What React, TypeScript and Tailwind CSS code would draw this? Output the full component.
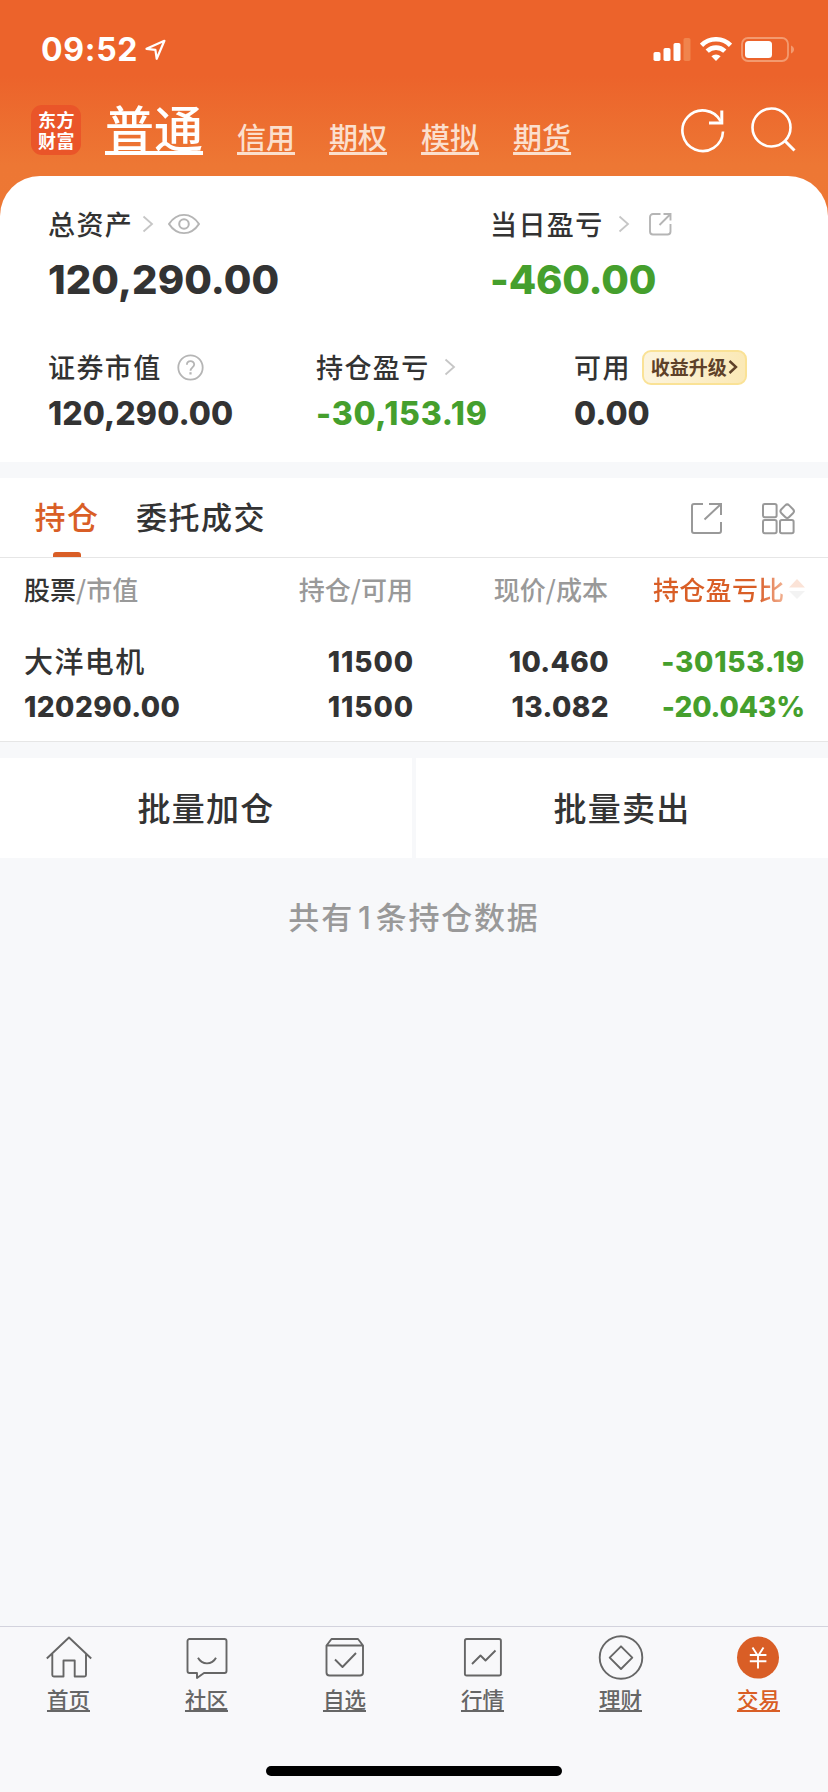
import type { ReactNode } from "react";

const CJK = "font-['Noto_Sans_CJK_SC',sans-serif]";
const NUM = "font-['Inter',sans-serif] font-extrabold";

function Chevron() {
  return (
    <svg width="12" height="18" viewBox="0 0 12 18" fill="none" stroke="#c6c6c6" strokeWidth="1.8" className="block">
      <path d="M1.500 1.500 10 9l-8.500 7.500" />
    </svg>
  );
}

function StatusBar() {
  return (
    <div className="flex h-[98px] items-start pl-[41px] pr-[33px] text-white">
      <span className="mt-[30px] w-[104px] font-['Inter',sans-serif] text-[32px] font-bold leading-[40px] tracking-[0.700px]">09:52</span>
      <svg width="22" height="22" viewBox="0 0 22 22" className="mt-[39px]" fill="none" stroke="#fff" strokeWidth="2.200" strokeLinejoin="round">
        <path d="M1.500 9.800 19.400 1.800 11.700 19.800 10.400 10.900Z" />
      </svg>
      <div className="flex-1" />
      <svg width="38" height="24" viewBox="0 0 38 24" className="mt-[38px]" fill="#fff">
        <rect x="0.500" y="14" width="7" height="9" rx="1.800" />
        <rect x="10.500" y="10" width="7" height="13" rx="1.800" />
        <rect x="20.500" y="5" width="7" height="18" rx="1.800" />
        <rect x="30.500" y="0" width="7" height="23" rx="1.800" fill="#f0844d" />
      </svg>
      <svg width="32" height="24" viewBox="0 0 32 24" className="ml-[9px] mt-[37px]" fill="none" stroke="#fff" strokeWidth="4.600">
        <path d="M1.500 8.300a20.500 20.500 0 0 1 29 0" />
        <path d="M7.200 14.200a12.600 12.600 0 0 1 17.600 0" />
        <path d="M16 24l-4.600-4.700a6.600 6.600 0 0 1 9.200 0z" fill="#fff" stroke="none" />
      </svg>
      <svg width="54" height="26" viewBox="0 0 54 26" className="ml-[9px] mt-[37px]">
        <rect x="1" y="1" width="46" height="23" rx="6" fill="none" stroke="#f39a6f" strokeWidth="1.800" />
        <rect x="4" y="4" width="27" height="17" rx="3.500" fill="#fff" />
        <path d="M50 8.500c4 1.500 4 6.500 0 8z" fill="#f39a6f" />
      </svg>
    </div>
  );
}

function NavBar() {
  return (
    <div className="flex h-[78px] items-start pl-[31px]">
      <div className="mt-[7px] h-[50px] w-[50px] rounded-[11px] bg-[#ea5529] pl-px pt-[6px] text-center font-['Liberation_Sans','Noto_Sans_CJK_SC',sans-serif] text-[18px] font-bold leading-[21px] tracking-[0.500px] text-white">
        东方
        <br />
        财富
      </div>
      <span className={`${CJK} ml-[24px] w-[98px] whitespace-nowrap text-[49px] font-medium leading-[56px] text-white underline decoration-[4px] underline-offset-[4px] [text-decoration-skip-ink:none]`}>
        普通
      </span>
      <div className={`${CJK} ml-[34px] mt-[18px] flex gap-[34px] text-[29px] font-[450] leading-[40px] text-[#fbdfcd]`}>
        {["信用", "期权", "模拟", "期货"].map((t) => (
          <span key={t} className="underline decoration-[3px] underline-offset-[3px] [text-decoration-skip-ink:none]">
            {t}
          </span>
        ))}
      </div>
      <svg width="46" height="46" viewBox="0 0 46 46" className="ml-[109px] mt-[9px]" fill="none" stroke="#fff" strokeWidth="2.600">
        <path d="M43 24.500A20.300 20.300 0 1 1 40.800 14.500" />
        <path d="M41.800 3.500V16H29" strokeWidth="3" />
      </svg>
      <svg width="46" height="46" viewBox="0 0 46 46" className="ml-[24px] mt-[9px]" fill="none" stroke="#fff" strokeWidth="2.600">
        <circle cx="21.500" cy="20.500" r="19" />
        <path d="m35 34 9.500 9.500" strokeWidth="3" />
      </svg>
    </div>
  );
}

function Label({ text, children }: { text: string; children?: ReactNode }) {
  return (
    <div className="flex h-[40px] items-center">
      <span className={`${CJK} whitespace-nowrap text-[27px] font-[450] leading-[40px] tracking-[1.400px]`}>{text}</span>
      {children}
    </div>
  );
}

function Summary() {
  return (
    <section className="h-[286px] rounded-t-[40px] bg-white pl-[48px] pt-[28px]">
      <div className="flex">
        <div className="w-[442px]">
          <Label text="总资产">
            <div className="ml-[9px]"><Chevron /></div>
            <svg width="34" height="24" viewBox="0 0 34 24" className="ml-[13px]" fill="none" stroke="#b5b5b5" strokeWidth="2">
              <path d="M2 12C10-1.500 24-1.500 32 12C24 25.500 10 25.500 2 12Z" strokeLinejoin="round" transform="translate(0 1.200) scale(1 .9)" />
              <circle cx="17" cy="12" r="4.800" />
            </svg>
          </Label>
          <div className={`${NUM} mt-[12px] text-[40px] leading-[48px] tracking-[0.100px]`}>120,290.00</div>
        </div>
        <div>
          <Label text="当日盈亏">
            <div className="ml-[14px]"><Chevron /></div>
            <svg width="24" height="24" viewBox="0 0 24 24" className="ml-[18px]" fill="none" stroke="#b5b5b5" strokeWidth="1.900">
              <path d="M12.500 2H5a3 3 0 0 0-3 3v14.500a3 3 0 0 0 3 3h14.500a3 3 0 0 0 3-3V12" />
              <path d="M15.500 2h7v6.500M22.500 2 11.500 13" />
            </svg>
          </Label>
          <div className={`${NUM} mt-[12px] text-[40px] leading-[48px] tracking-[-0.200px] text-[#459f2d]`}>-460.00</div>
        </div>
      </div>
      <div className="mt-[43px] flex">
        <div className="w-[268px]">
          <Label text="证券市值">
            <svg width="27" height="27" viewBox="0 0 27 27" className="ml-[15px]" fill="none" stroke="#b5b5b5" strokeWidth="1.800">
              <circle cx="13.500" cy="13.500" r="12.200" />
              <path d="M9.900 10.800c0-4.900 7.300-4.700 7.300-.3 0 2.700-3.700 3-3.700 6.200" />
              <path d="M13.500 18.200v2.300" strokeWidth="2.200" />
            </svg>
          </Label>
          <div className={`${NUM} mt-[7px] text-[32px] leading-[40px] tracking-[0.100px]`}>120,290.00</div>
        </div>
        <div className="w-[258px]">
          <Label text="持仓盈亏">
            <div className="ml-[14px]"><Chevron /></div>
          </Label>
          <div className={`${NUM} mt-[7px] text-[32px] leading-[40px] tracking-[0.700px] text-[#459f2d]`}>-30,153.19</div>
        </div>
        <div>
          <Label text="可用">
            <div className={`${CJK} ml-[11px] flex h-[35px] w-[105px] items-center rounded-[9px] border-2 border-[#fae296] bg-linear-to-r from-[#fcf4de] to-[#fbe9b6] pl-[7px] text-[19px] font-bold leading-[30px] text-[#5e4129]`}>
              收益升级
              <svg width="10" height="16" viewBox="0 0 10 16" fill="none" stroke="#5e4129" strokeWidth="2.400" className="ml-[1px]">
                <path d="m1.500 2 6.500 6-6.500 6" />
              </svg>
            </div>
          </Label>
          <div className={`${NUM} mt-[7px] text-[32px] leading-[40px]`}>0.00</div>
        </div>
      </div>
    </section>
  );
}

function Tabs() {
  return (
    <div className="mt-[16px] flex h-[80px] items-start border-b border-[#e6e6e6] bg-white pl-[34px]">
      <div className="flex w-[66px] flex-col items-center">
        <span className={`${CJK} mt-[16px] whitespace-nowrap text-[31px] font-medium leading-[44px] tracking-[1.500px] text-[#d95e26]`}>持仓</span>
        <div className="mt-[14px] h-[5px] w-[28px] rounded-t-[3px] bg-[#d95e26]" />
      </div>
      <span className={`${CJK} ml-[36px] mt-[16px] text-[31px] font-medium leading-[44px] tracking-[1.500px]`}>委托成交</span>
      <div className="flex-1" />
      <svg width="32" height="32" viewBox="0 0 32 32" className="mt-[24px]" fill="none" stroke="#999" strokeWidth="2">
        <path d="M13 2H4a2 2 0 0 0-2 2v25a2 2 0 0 0 2 2h25a2 2 0 0 0 2-2v-9" />
        <path d="M19 2h12v11M31 2 14.500 17.500" />
      </svg>
      <svg width="35" height="33" viewBox="0 0 35 33" className="ml-[39px] mr-[32px] mt-[24px]" fill="none" stroke="#999" strokeWidth="2">
        <rect x="2" y="2" width="13.600" height="13.300" rx="1.800" />
        <rect x="2" y="18" width="13.600" height="13.300" rx="1.800" />
        <rect x="19" y="18" width="13.600" height="13.300" rx="1.800" />
        <rect x="20.700" y="3.700" width="11" height="11" rx="2.800" transform="rotate(45 26.200 9.200)" />
      </svg>
    </div>
  );
}

function Holdings() {
  return (
    <section className="h-[184px] border-b border-[#e6e6e6] bg-white pl-[24px]">
      <div className={`${CJK} flex h-[62px] items-center pb-px text-[26px] font-[450] leading-[40px] text-[#999]`}>
        <div className="w-[190px]"><span className="text-[#333]">股票</span>/市值</div>
        <div className="w-[199px] text-right">持仓/可用</div>
        <div className="w-[195px] text-right">现价/成本</div>
        <div className="ml-[45px] bg-linear-to-r from-[#d95e26] from-80% to-[#f2b596] bg-clip-text tracking-[0.300px] text-transparent">持仓盈亏比</div>
        <svg width="16" height="20" viewBox="0 0 16 20" className="ml-[4px]">
          <path d="M0 8.500 8 0l8 8.500z" fill="#fbe3d7" />
          <path d="M0 12 8 20l8-8z" fill="#f3f3f3" />
        </svg>
      </div>
      <div className="flex pt-[19px]">
        <div className="w-[190px]">
          <div className={`${CJK} pb-[3px] text-[29px] font-[450] leading-[43px] tracking-[1.400px]`}>大洋电机</div>
          <div className={`${NUM} text-[28px] leading-[45px] tracking-[0.450px]`}>120290.00</div>
        </div>
        <div className={`${NUM} w-[200px] text-right text-[28px] leading-[46px] tracking-[0.900px]`}>
          <div>11500</div>
          <div className="leading-[45px]">11500</div>
        </div>
        <div className={`${NUM} w-[195px] text-right text-[28px] leading-[46px] tracking-[0.400px]`}>
          <div>10.460</div>
          <div className="leading-[45px]">13.082</div>
        </div>
        <div className={`${NUM} w-[196px] text-right text-[28px] leading-[46px] text-[#459f2d]`}>
          <div className="tracking-[0.700px]">-30153.19</div>
          <div className="leading-[45px] tracking-[-0.100px]">-20.043%</div>
        </div>
      </div>
    </section>
  );
}

function TabItem({ label, active, children }: { label: string; active?: boolean; children: ReactNode }) {
  return (
    <div className={`flex w-[138px] flex-col items-center ${active ? "text-[#d95e26]" : "text-[#666]"}`}>
      <svg width="46" height="46" viewBox="0 0 46 46" className="mt-[8px]" fill="none" stroke="currentColor" strokeWidth="1.900" strokeLinejoin="round">
        {children}
      </svg>
      <span className={`${CJK} mr-px mt-[2px] text-[21.500px] font-[450] leading-[32px] underline decoration-[2px] underline-offset-[2px] [text-decoration-skip-ink:none]`}>{label}</span>
    </div>
  );
}

function BottomBar() {
  return (
    <nav className="flex h-[166px] flex-col items-center border-t border-[#d3d3dd] bg-[#f8f8fa]">
      <div className="flex h-[139px]">
        <TabItem label="首页">
          <path d="M.8 23.500 23 2.500l22.200 21M6.300 18.500V40a1.500 1.500 0 0 0 1.500 1.500H17.500V25.500H28.700V41.500H38.500A1.500 1.500 0 0 0 40 40V18.500" />
        </TabItem>
        <TabItem label="社区">
          <path d="M5.500 4h35a2 2 0 0 1 2 2v30a2 2 0 0 1-2 2H20l-7 5V38H5.500a2 2 0 0 1-2-2V6a2 2 0 0 1 2-2Z" />
          <path d="M14 22.800c4 7.400 14 7.400 18 0" />
        </TabItem>
        <TabItem label="自选">
          <path d="M4.500 10.500v27a3 3 0 0 0 3 3H38a3 3 0 0 0 3-3v-27l-5-6.500H9.500ZM4.500 10.500H41M13 24.500l7.500 7.500L34 18" />
        </TabItem>
        <TabItem label="行情">
          <rect x="4.900" y="4" width="36" height="36.500" rx="1.800" />
          <path d="m12 29 8.500-8.500 5 5L35.500 15.500" />
        </TabItem>
        <TabItem label="理财">
          <circle cx="23" cy="22.500" r="21.300" />
          <path d="M23 11.300 34.300 22.700 23 34 11.700 22.700Z" />
        </TabItem>
        <TabItem label="交易" active>
          <circle cx="22" cy="22.500" r="21" fill="currentColor" stroke="none" />
          <path d="m16.500 12.500 5.500 8.500 5.500-8.500M22 21v12.500M13.800 20h16.600M13.800 26.300h16.600" stroke="#fff" strokeLinejoin="miter" />
        </TabItem>
      </div>
      <div className="h-[10px] w-[296px] rounded-full bg-black" />
    </nav>
  );
}

export default function App() {
  return (
    <main className={`${CJK} flex h-[1792px] w-[828px] flex-col overflow-hidden bg-[#f7f8fa] text-[#333]`}>
      <header className="bg-[linear-gradient(#ec632b_0px,#ec632b_76px,#ed7734_165px,#ee7834_286px)]">
        <StatusBar />
        <NavBar />
        <Summary />
      </header>
      <Tabs />
      <Holdings />
      <div className="mt-[16px] flex gap-[4px]">
        {["批量加仓", "批量卖出"].map((t) => (
          <div key={t} className="flex-1 bg-white pb-[2px] text-center text-[33px] font-medium leading-[98px] tracking-[1.300px]">
            {t}
          </div>
        ))}
      </div>
      <div className="mt-[36px] flex flex-1 justify-center text-[31px] font-[450] leading-[44px] tracking-[1.800px] text-[#999]">
        <p>
          共有<span className="pl-[4px] pr-[3px] font-['Inter',sans-serif] font-medium">1</span>条持仓数据
        </p>
      </div>
      <BottomBar />
    </main>
  );
}
